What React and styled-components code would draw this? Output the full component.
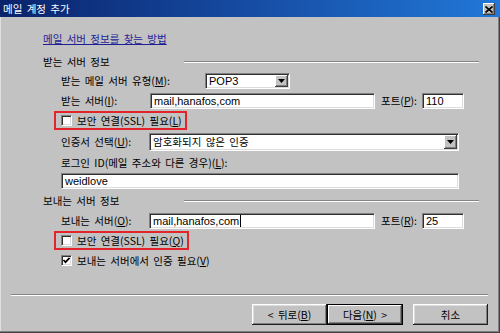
import React from 'react';
import styled, { createGlobalStyle } from 'styled-components';

const Global = createGlobalStyle`
  html, body { margin: 0; padding: 0; background: #c2c2c2; }
  body {
    font-family: "Noto Sans CJK KR", "Noto Sans", sans-serif;
    font-size: 10.5px;
    color: #000;
    word-spacing: 2px;
  }
  * { box-sizing: border-box; }
`;

const Window = styled.div`
  width: 500px;
  height: 333px;
  display: flex;
  flex-direction: column;
  background: #c2c2c2;
  overflow: hidden;
`;

const TitleBar = styled.div`
  height: 17px;
  flex: none;
  display: flex;
  align-items: center;
  justify-content: space-between;
  padding: 0 5px 0 3px;
  background: linear-gradient(90deg, #0a226a 0%, #15489e 45%, #2178d8 100%);
  color: #fff;
`;

const Title = styled.span`
  line-height: 17px;
  font-size: 10.5px;
`;

const CloseButton = styled.div`
  width: 12px;
  height: 12px;
  margin-top: 1px;
  background: #c2c2c2;
  display: flex;
  align-items: center;
  justify-content: center;
  box-shadow: inset -1px -1px #404040, inset 1px 1px #fff, inset -2px -2px #808080;
`;

const Body = styled.div`
  flex: 1;
  display: flex;
  flex-direction: column;
  box-shadow: inset -1px -1px #404040, inset -2px -2px #808080, inset 1px 0 #e0e0e0;
`;

const Content = styled.div`
  padding: 15px 0 0 43px;
  display: flex;
  flex-direction: column;
`;

const Link = styled.div`
  height: 14px;
  line-height: 14px;
  color: #1e1e96;
  text-decoration: underline;
  white-space: nowrap;
`;

const SectionHeader = styled.div`
  display: flex;
  align-items: center;
  height: 14px;
  margin-top: ${p => p.$mt}px;
  padding-right: 21px;
`;

const SectionLabel = styled.span`
  width: 141px;
  flex: none;
  line-height: 14px;
  white-space: nowrap;
`;

const Rule = styled.div`
  flex: 1;
  height: 2px;
  border-top: 1px solid #858585;
  border-bottom: 1px solid #fff;
`;

const Indent = styled.div`
  padding-left: 18px;
  display: flex;
  flex-direction: column;
`;

const FieldRow = styled.div`
  display: flex;
  align-items: center;
  height: ${p => p.$h}px;
  margin-top: ${p => p.$mt}px;
`;

const Label = styled.span`
  width: ${p => (p.$w ? `${p.$w}px` : 'auto')};
  flex: none;
  white-space: nowrap;
  line-height: 14px;
  margin-left: ${p => p.$ml || 0}px;
`;

const U = styled.span`
  text-decoration: underline;
`;

const Sunken = styled.div`
  width: ${p => p.$w}px;
  height: ${p => p.$h || 16}px;
  flex: none;
  background: #fff;
  border: 1px solid;
  border-color: #808080 #fff #fff #808080;
  box-shadow: inset 1px 1px #303030, inset -1px -1px #dcdcdc;
  display: flex;
  align-items: center;
  padding-left: 3px;
  font-family: "Liberation Sans", Arial, sans-serif;
  font-size: 11px;
  word-spacing: 0;
  white-space: nowrap;
  overflow: hidden;
`;

const KoText = styled.span`
  font-family: "Noto Sans CJK KR", sans-serif;
  font-size: 10.5px;
  word-spacing: 2px;
  flex: 1;
`;

const PlainText = styled.span`
  flex: 1;
`;

const Caret = styled.span`
  display: inline-block;
  width: 1px;
  height: 12px;
  background: #000;
  margin-left: 1px;
  vertical-align: middle;
`;

const DropArrow = styled.div`
  width: 13px;
  align-self: stretch;
  margin: 1px 1px 1px 0;
  flex: none;
  background: #c2c2c2;
  display: flex;
  align-items: center;
  justify-content: center;
  box-shadow: inset -1px -1px #404040, inset 1px 1px #fff, inset -2px -2px #808080;
`;

const CheckRow = styled.div`
  display: flex;
  align-items: center;
  align-self: flex-start;
  height: 19px;
  margin-top: ${p => p.$mt}px;
  margin-left: -7px;
  padding: 0 3px 0 5px;
  border: 2px solid ${p => (p.$highlight ? '#e2252b' : 'transparent')};
  white-space: nowrap;
`;

const Box = styled.div`
  width: 11px;
  height: 11px;
  flex: none;
  background: #fff;
  border: 1px solid;
  border-color: #808080 #fff #fff #808080;
  box-shadow: inset 1px 1px #303030, inset -1px -1px #dcdcdc;
  margin-right: 5px;
  display: flex;
  align-items: center;
  justify-content: center;
`;

const Footer = styled.div`
  margin-top: auto;
  padding: 0 12px 8px 11px;
  display: flex;
  flex-direction: column;
`;

const FooterRule = styled.div`
  height: 2px;
  border-top: 1px solid #858585;
  border-bottom: 1px solid #fff;
`;

const ButtonBar = styled.div`
  display: flex;
  justify-content: flex-end;
  margin-top: 8px;
`;

const Button = styled.div`
  width: ${p => p.$w || 75}px;
  height: 21px;
  margin-left: ${p => p.$ml || 0}px;
  display: flex;
  align-items: center;
  justify-content: center;
  background: #c2c2c2;
  white-space: nowrap;
  border: 1px solid ${p => (p.$default ? '#000' : 'transparent')};
  box-shadow: ${p =>
    p.$default
      ? 'inset -1px -1px #404040, inset 1px 1px #fff, inset -2px -2px #808080'
      : 'inset -1px -1px #202020, inset 1px 1px #fff, inset -2px -2px #808080'};
  ${p => (!p.$default ? 'border: none; box-shadow: inset -1px -1px #202020, inset 1px 1px #fff, inset -2px -2px #808080, inset 2px 2px #dcdcdc;' : '')}
`;

const Arrow = () => (
  <svg width="7" height="4" viewBox="0 0 7 4">
    <path d="M0 0 H7 L3.5 4 Z" fill="#000" />
  </svg>
);

const Check = () => (
  <svg width="9" height="9" viewBox="0 0 9 9">
    <path d="M1.5 4 L3.5 6.2 L7.6 1.8" stroke="#000" strokeWidth="1.7" fill="none" />
  </svg>
);

const CloseX = () => (
  <svg width="8" height="7" viewBox="0 0 8 7">
    <path d="M0.5 0.5 L7.5 6.5 M7.5 0.5 L0.5 6.5" stroke="#000" strokeWidth="1.6" />
  </svg>
);

export default function App() {
  return (
    <>
      <Global />
      <Window>
        <TitleBar>
          <Title>메일 계정 추가</Title>
          <CloseButton><CloseX /></CloseButton>
        </TitleBar>
        <Body>
          <Content>
            <Link>메일 서버 정보를 찾는 방법</Link>

            <SectionHeader $mt={9}>
              <SectionLabel>받는 서버 정보</SectionLabel>
              <Rule />
            </SectionHeader>

            <Indent>
              <FieldRow $h={18} $mt={3}>
                <Label $w={144}>받는 메일 서버 유형(<U>M</U>):</Label>
                <Sunken $w={85}>
                  <PlainText>POP3</PlainText>
                  <DropArrow><Arrow /></DropArrow>
                </Sunken>
              </FieldRow>

              <FieldRow $h={18} $mt={2}>
                <Label $w={89}>받는 서버(<U>I</U>):</Label>
                <Sunken $w={225}>mail,hanafos,com</Sunken>
                <Label $w={41} $ml={6}>포트(<U>P</U>):</Label>
                <Sunken $w={42}>110</Sunken>
              </FieldRow>

              <CheckRow $highlight $mt={1}>
                <Box />
                보안 연결(SSL) 필요(<U>L</U>)
              </CheckRow>

              <FieldRow $h={19} $mt={2}>
                <Label $w={88}>인증서 선택(<U>U</U>):</Label>
                <Sunken $w={310} $h={18}>
                  <KoText>암호화되지 않은 인증</KoText>
                  <DropArrow><Arrow /></DropArrow>
                </Sunken>
              </FieldRow>

              <FieldRow $h={15} $mt={4}>
                <Label>로그인 ID(메일 주소와 다른 경우)(<U>L</U>):</Label>
              </FieldRow>

              <FieldRow $h={16} $mt={3}>
                <Sunken $w={398}>weidlove</Sunken>
              </FieldRow>
            </Indent>

            <SectionHeader $mt={5}>
              <SectionLabel>보내는 서버 정보</SectionLabel>
              <Rule />
            </SectionHeader>

            <Indent>
              <FieldRow $h={18} $mt={4}>
                <Label $w={88}>보내는 서버(<U>O</U>):</Label>
                <Sunken $w={226}>mail,hanafos,com<Caret /></Sunken>
                <Label $w={41} $ml={6}>포트(<U>R</U>):</Label>
                <Sunken $w={42}>25</Sunken>
              </FieldRow>

              <CheckRow $highlight $mt={1}>
                <Box />
                보안 연결(SSL) 필요(<U>Q</U>)
              </CheckRow>

              <CheckRow $mt={1}>
                <Box><Check /></Box>
                보내는 서버에서 인증 필요(<U>V</U>)
              </CheckRow>
            </Indent>
          </Content>

          <Footer>
            <FooterRule />
            <ButtonBar>
              <Button $w={75}>&lt; 뒤로(<U>B</U>)</Button>
              <Button $w={76} $default>다음(<U>N</U>) &gt;</Button>
              <Button $w={75} $ml={10}>취소</Button>
            </ButtonBar>
          </Footer>
        </Body>
      </Window>
    </>
  );
}
